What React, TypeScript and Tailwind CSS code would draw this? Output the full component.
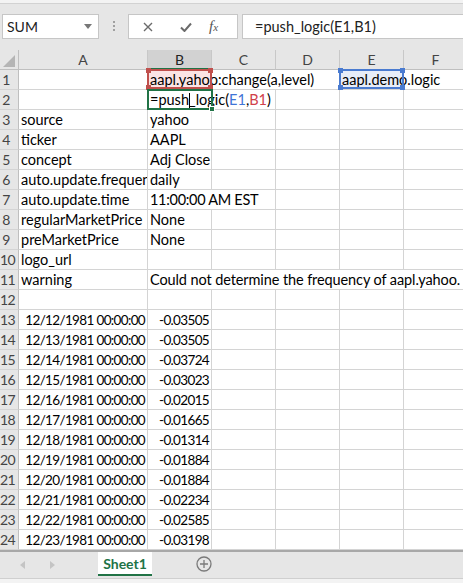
import type { ReactNode } from "react";

const FONT = { fontFamily: "Lato, 'Liberation Sans', sans-serif" };
const COLS = [129, 64, 64, 64, 64, 64];
const LETTERS = ["A", "B", "C", "D", "E", "F"];

type CellDef = {
  span?: number;
  text?: ReactNode;
  right?: boolean;
  clip?: boolean;
  noBorder?: boolean;
  bg?: string;
  overlay?: ReactNode;
};

function width(start: number, span: number) {
  return COLS.slice(start, start + span).reduce((a, b) => a + b, 0);
}

function Corners({ color }: { color: string }) {
  return (
    <>
      <span className={`absolute -left-[3px] -top-[3px] h-[5px] w-[5px] ${color}`} />
      <span className={`absolute -right-[3px] -top-[3px] h-[5px] w-[5px] ${color}`} />
      <span className={`absolute -left-[3px] -bottom-[3px] h-[5px] w-[5px] ${color}`} />
      <span className={`absolute -right-[3px] -bottom-[3px] h-[5px] w-[5px] ${color}`} />
    </>
  );
}

const dates = [
  ["12/12/1981 00:00:00", "-0.03505"],
  ["12/13/1981 00:00:00", "-0.03505"],
  ["12/14/1981 00:00:00", "-0.03724"],
  ["12/15/1981 00:00:00", "-0.03023"],
  ["12/16/1981 00:00:00", "-0.02015"],
  ["12/17/1981 00:00:00", "-0.01665"],
  ["12/18/1981 00:00:00", "-0.01314"],
  ["12/19/1981 00:00:00", "-0.01884"],
  ["12/20/1981 00:00:00", "-0.01884"],
  ["12/21/1981 00:00:00", "-0.02234"],
  ["12/22/1981 00:00:00", "-0.02585"],
  ["12/23/1981 00:00:00", "-0.03198"],
];

// numbers in Calibri are narrower than Lato's tabular digits
const num = (s: string) => <span className="text-[13.5px] tracking-[-0.65px]">{s}</span>;

const rows: CellDef[][] = [
  [
    {},
    {
      text: "aapl.yahoo:change(a,level)",
      noBorder: true,
      bg: "bg-[#fbe4e4]",
      overlay: (
        <span className="absolute -left-px -top-px bottom-0 right-0 z-10 border-2 border-[#c0504d]">
          <Corners color="bg-[#c0504d]" />
        </span>
      ),
    },
    { noBorder: true },
    {},
    {
      text: "aapl.demo.logic",
      noBorder: true,
      bg: "bg-[#e7edf8]",
      overlay: (
        <span className="absolute -left-px -top-px bottom-0 right-0 z-10 border-2 border-[#4a7bd0]">
          <Corners color="bg-[#4a7bd0]" />
        </span>
      ),
    },
    {},
  ],
  [
    {},
    {
      text: (
        <>
          =push
          <span className="mx-[-0.5px] inline-block h-[15px] w-px bg-black align-[-3px]" />
          _logic(<span className="text-[#3f74d6]">E1</span>,<span className="text-[#d0404a]">B1</span>)
        </>
      ),
      noBorder: true,
      overlay: (
        <span className="absolute -left-px -top-px bottom-[-1px] right-[-1px] z-10 border-2 border-[#217346]">
          <span className="absolute -bottom-[4px] -right-[4px] h-[6px] w-[6px] border border-white bg-[#217346]" />
        </span>
      ),
    },
    {},
    {},
    {},
    {},
  ],
  [{ text: "source" }, { text: "yahoo" }, {}, {}, {}, {}],
  [{ text: "ticker" }, { text: "AAPL" }, {}, {}, {}, {}],
  [{ text: "concept" }, { text: "Adj Close" }, {}, {}, {}, {}],
  [{ text: "auto.update.frequency", clip: true }, { text: "daily" }, {}, {}, {}, {}],
  [
    { text: "auto.update.time" },
    { text: <span className="tracking-[-0.3px]">11:00:00 AM EST</span>, span: 2 },
    {},
    {},
    {},
  ],
  [{ text: "regularMarketPrice" }, { text: "None" }, {}, {}, {}, {}],
  [{ text: "preMarketPrice" }, { text: "None" }, {}, {}, {}, {}],
  [{ text: "logo_url" }, {}, {}, {}, {}, {}],
  [
    { text: "warning" },
    {
      text: <span className="tracking-[-0.1px]">Could not determine the frequency of aapl.yahoo.</span>,
      span: 5,
    },
  ],
  [{}, {}, {}, {}, {}, {}],
  ...dates.map(([d, v]) => [
    { text: num(d), right: true },
    { text: num(v), right: true },
    {},
    {},
    {},
    {},
  ]),
];

function Row({ n, cells }: { n: number; cells: CellDef[] }) {
  let col = 0;
  return (
    <div className="flex h-5">
      <div className="w-[19px] shrink-0 overflow-hidden border-b border-r border-b-[#d4d4d4] border-r-[#bfbfbf] bg-[#e6e6e6] pr-[6px] text-center text-[14px] leading-[19px] tracking-[-0.5px] text-[#444]">
        {n}
      </div>
      {cells.map((c, i) => {
        const span = c.span ?? 1;
        const w = width(col, span);
        col += span;
        return (
          <div
            key={i}
            style={{ width: w }}
            className={`relative h-5 shrink-0 whitespace-nowrap border-b border-[#d4d4d4] text-[14.5px] leading-[19px] text-black ${
              c.noBorder ? "" : "border-r"
            } ${c.clip ? "overflow-hidden" : ""} ${c.right ? "pr-[2px] text-right" : "pl-[2px]"} ${c.bg ?? ""}`}
          >
            {c.text}
            {c.overlay}
          </div>
        );
      })}
    </div>
  );
}

export default function App() {
  return (
    <div className="h-[583px] w-[463px] overflow-hidden bg-white" style={FONT}>
      {/* ribbon edge */}
      <div className="h-[4px] border-b border-[#d2d2d2] bg-[#f3f3f3]" />
      {/* formula bar */}
      <div className="flex h-[46px] items-start bg-[#e6e6e6] pt-[10px]">
        <div className="ml-[2px] flex h-[25px] w-[97px] items-center justify-between border border-[#c6c6c6] bg-white pl-[4px] pr-[6px] text-[14px] text-[#222]">
          <span>SUM</span>
          <svg width="8" height="5" viewBox="0 0 8 5">
            <path d="M0 0h8L4 5z" fill="#777" />
          </svg>
        </div>
        <div className="ml-[14px] mt-[7px] flex flex-col gap-[2px]">
          <span className="h-[2px] w-[2px] bg-[#a0a0a0]" />
          <span className="h-[2px] w-[2px] bg-[#a0a0a0]" />
          <span className="h-[2px] w-[2px] bg-[#a0a0a0]" />
        </div>
        <div className="ml-[13px] flex h-[25px] w-[110px] items-center border border-[#c6c6c6] bg-white">
          <svg className="ml-[14px]" width="10" height="10" viewBox="0 0 10 10">
            <path d="M1 1l8 8M9 1l-8 8" stroke="#6b6b6b" strokeWidth="1.4" />
          </svg>
          <svg className="ml-[27px]" width="12" height="10" viewBox="0 0 12 10">
            <path d="M1 5.5l3.5 3.5L11 1.5" stroke="#6b6b6b" strokeWidth="2" fill="none" />
          </svg>
          <span
            className="ml-[17px] text-[15px] italic text-[#555]"
            style={{ fontFamily: "'Liberation Serif', serif" }}
          >
            f<span className="text-[11px]">x</span>
          </span>
        </div>
        <div className="ml-[4px] flex h-[25px] flex-1 items-center border border-[#c6c6c6] border-r-0 bg-white pl-[12px] text-[14.5px] text-[#222]">
          =push_logic(E1,B1)
        </div>
      </div>
      {/* column headers */}
      <div className="flex h-5 bg-[#e6e6e6]">
        <div className="relative w-[19px] shrink-0 border-b border-r border-[#bfbfbf]">
          <svg className="absolute bottom-[2px] right-[3px]" width="12" height="12" viewBox="0 0 12 12">
            <path d="M12 0v12H0z" fill="#b5b5b5" />
          </svg>
        </div>
        {LETTERS.map((l, i) => (
          <div
            key={l}
            style={{ width: COLS[i] }}
            className={`shrink-0 border-r border-[#c8c8c8] text-center text-[14px] leading-[19px] ${
              l === "B"
                ? "border-b-2 border-b-[#217346] bg-[#d2d2d2] text-[#222]"
                : "border-b border-b-[#bfbfbf] text-[#444]"
            }`}
          >
            {l}
          </div>
        ))}
      </div>
      {/* grid */}
      <div>
        {rows.map((cells, i) => (
          <Row key={i} n={i + 1} cells={cells} />
        ))}
      </div>
      {/* sheet tabs */}
      <div className="flex h-[28px] items-start border-t-2 border-[#a8a8a8] bg-[#e6e6e6]">
        <svg className="ml-[20px] mt-[9px]" width="5" height="8" viewBox="0 0 5 8">
          <path d="M5 0v8L0 4z" fill="#c4c4c4" />
        </svg>
        <svg className="ml-[25px] mt-[9px]" width="5" height="8" viewBox="0 0 5 8">
          <path d="M0 0v8l5-4z" fill="#c4c4c4" />
        </svg>
        <div className="ml-[43px] flex h-[24px] w-[54px] items-center justify-center border-b-2 border-[#217346] bg-white text-[14px] font-bold text-[#217346]">
          Sheet1
        </div>
        <svg className="ml-[44px] mt-[4px]" width="16" height="16" viewBox="0 0 16 16">
          <circle cx="8" cy="8" r="7" stroke="#7a7a7a" strokeWidth="1.3" fill="none" />
          <path d="M8 4v8M4 8h8" stroke="#7a7a7a" strokeWidth="1.3" />
        </svg>
      </div>
      <div className="h-[5px] border-t border-[#cfcfcf] bg-[#f3f3f3]" />
    </div>
  );
}
